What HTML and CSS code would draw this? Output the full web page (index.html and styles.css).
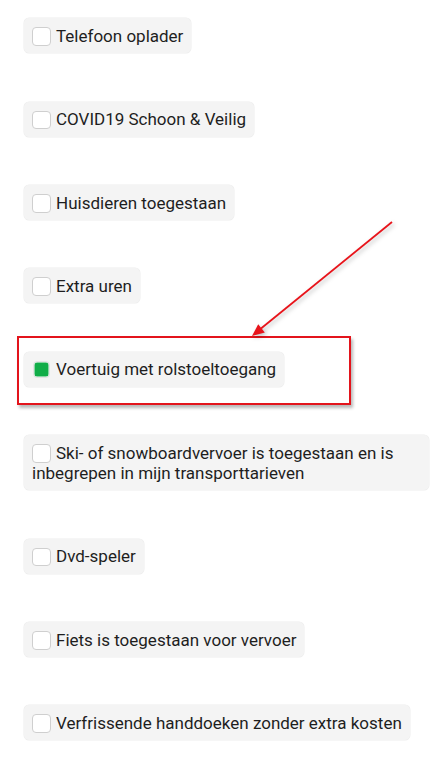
FILE: index.html
```html
<!DOCTYPE html>
<html lang="nl">
<head>
<meta charset="utf-8">
<link rel="stylesheet" href="styles.css">
</head>
<body>
<div class="page">
  <ul class="list">
    <li class="item"><label class="chip"><span class="box"></span>Telefoon oplader</label></li>
    <li class="item"><label class="chip"><span class="box"></span>COVID19 Schoon &amp; Veilig</label></li>
    <li class="item"><label class="chip"><span class="box"></span>Huisdieren toegestaan</label></li>
    <li class="item"><label class="chip"><span class="box"></span>Extra uren</label></li>
    <li class="item"><label class="chip"><span class="box checked"></span>Voertuig met rolstoeltoegang</label></li>
    <li class="item"><label class="chip"><span class="box"></span>Ski- of snowboardvervoer is toegestaan en is inbegrepen in mijn transporttarieven</label></li>
    <li class="item"><label class="chip"><span class="box"></span>Dvd-speler</label></li>
    <li class="item"><label class="chip"><span class="box"></span>Fiets is toegestaan voor vervoer</label></li>
    <li class="item"><label class="chip"><span class="box"></span>Verfrissende handdoeken zonder extra kosten</label></li>
  </ul>
  <div class="highlight"></div>
  <svg class="arrow" width="444" height="761" viewBox="0 0 444 761">
    <line x1="392" y1="222" x2="261" y2="328.5" stroke="#e8141b" stroke-width="1.8"/>
    <polygon points="252,336 264.8,332.4 258.2,324.2" fill="#e8141b"/>
  </svg>
</div>
</body>
</html>
```

FILE: styles.css
```css
html, body {
  margin: 0;
  padding: 0;
  background: #ffffff;
}

.page {
  position: relative;
  width: 444px;
  height: 761px;
  overflow: hidden;
  font-family: Roboto, "Noto Sans", Arial, sans-serif;
  font-size: 17px;
  color: #1e1e1e;
}

.list {
  list-style: none;
  margin: 0;
  padding: 18.3px 15px 0 24px;
}

.item {
  margin: 0 0 48.4px 0;
}

.chip {
  display: block;
  width: fit-content;
  box-sizing: border-box;
  max-width: 405px;
  background: #f4f4f4;
  border-radius: 5px;
  padding: 7.5px 8px 7.5px 8px;
  line-height: 20px;
  box-shadow: 0 0 0 0.5px #ededed;
}

.box {
  display: inline-block;
  box-sizing: border-box;
  width: 19px;
  height: 18.5px;
  margin-right: 5px;
  vertical-align: -4px;
  background: #ffffff;
  border: 1px solid #cfcfcf;
  border-radius: 4px;
}

.box.checked {
  width: 17px;
  height: 17px;
  margin-left: 1px;
  margin-right: 6px;
  vertical-align: -3px;
  border: 1.5px solid #e2e2e2;
  background: #11ad48;
  background-clip: padding-box;
  box-shadow: inset 0 0 0 0.5px #ffffff;
}

.highlight {
  position: absolute;
  left: 16.5px;
  top: 335.5px;
  width: 334px;
  height: 69.5px;
  box-sizing: border-box;
  border: 2px solid #e3141c;
  box-shadow: 2px 3px 3px rgba(0, 0, 0, 0.28);
}

.arrow {
  position: absolute;
  left: 0;
  top: 0;
  filter: drop-shadow(2px 2px 2px rgba(0, 0, 0, 0.25));
}
```
